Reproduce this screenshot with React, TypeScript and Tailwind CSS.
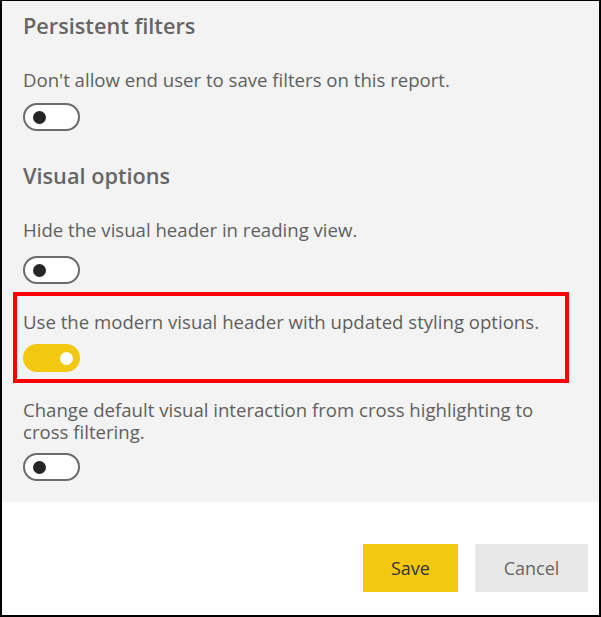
import React from 'react';

const Toggle: React.FC<{ on?: boolean }> = ({ on }) =>
  on ? (
    <div className="flex h-[28px] w-[57px] items-center justify-end rounded-full bg-[#f2c811] pr-[7px]">
      <div className="h-[13px] w-[13px] rounded-full bg-white" />
    </div>
  ) : (
    <div className="flex h-[28px] w-[57px] items-center rounded-full border-2 border-[#6b6b6b] bg-white pl-[8px]">
      <div className="h-[13px] w-[13px] rounded-full bg-[#252525]" />
    </div>
  );

export default function App() {
  return (
    <div
      className="flex h-[617px] w-[601px] flex-col border-t border-l-2 border-r-2 border-b-2 border-black bg-white"
      style={{ fontFamily: '"Open Sans", "Noto Sans", sans-serif' }}
    >
      <div className="flex h-[501px] flex-col bg-[#f3f3f3] pl-[21px] text-[#606060]">
        <h2 className="mt-[11px] text-[21.7px] font-semibold leading-[28px] text-[#666]">Persistent filters</h2>
        <p className="mt-[28px] text-[18.6px] leading-[24px]">Don't allow end user to save filters on this report.</p>
        <div className="mt-[11px]">
          <Toggle />
        </div>

        <h2 className="mt-[31px] text-[21.7px] font-semibold leading-[28px] text-[#666]">Visual options</h2>
        <p className="mt-[28px] text-[18.6px] leading-[24px]">Hide the visual header in reading view.</p>
        <div className="mt-[14px]">
          <Toggle />
        </div>

        <div className="ml-[-10px] mt-[8px] flex h-[91px] w-[556px] flex-col border-4 border-[#ff0000] pl-[6px]">
          <p className="mt-[14px] text-[18.6px] leading-[24px]">Use the modern visual header with updated styling options.</p>
          <div className="mt-[10px]">
            <Toggle on />
          </div>
        </div>

        <p className="mt-[16px] text-[18.6px] leading-[22px]">
          Change default visual interaction from cross highlighting to
          <br />
          cross filtering.
        </p>
        <div className="mt-[10px]">
          <Toggle />
        </div>
      </div>

      <div className="mr-[11px] mt-[42px] flex justify-end gap-[17px]">
        <button className="h-[48px] w-[95px] bg-[#f2c811] text-[18px] text-[#333]">Save</button>
        <button className="h-[48px] w-[113px] bg-[#e8e8e8] text-[18px] text-[#666]">Cancel</button>
      </div>
    </div>
  );
}
